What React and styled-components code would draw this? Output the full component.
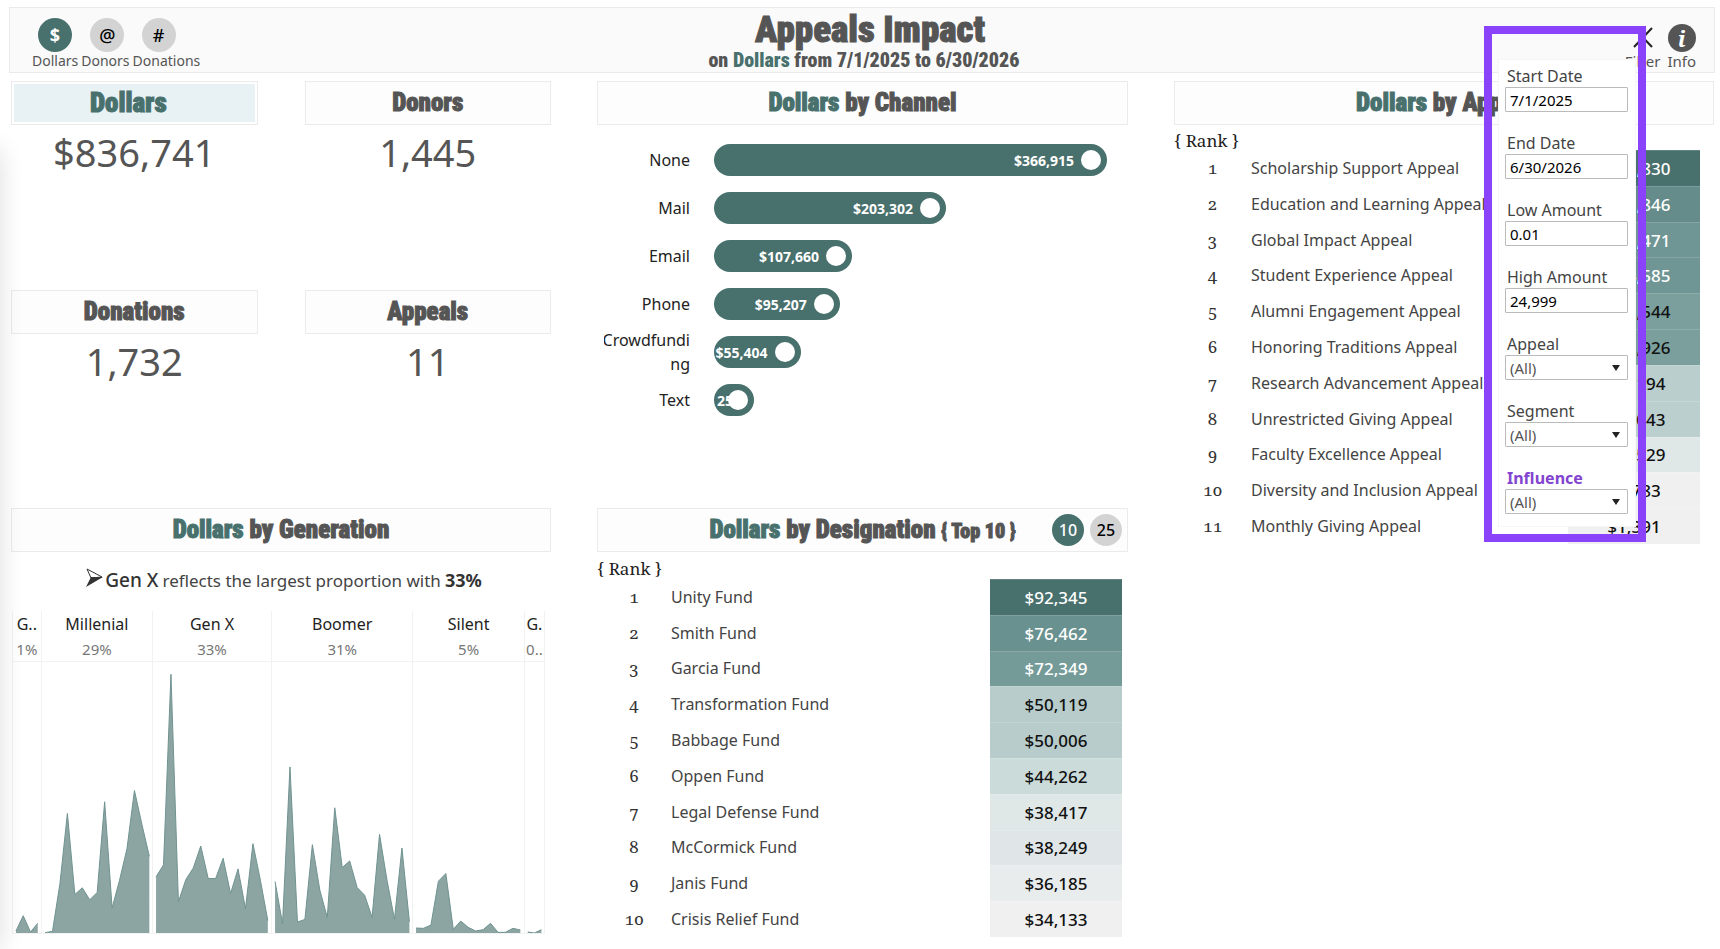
import React, { useState } from 'react'
import styled, { createGlobalStyle, css } from 'styled-components'

const TEAL = '#48706d'
const GREY = '#555'
const LINE = '#ebebeb'
const PURPLE = '#8a43fb'

const sans = '"Noto Sans", "Open Sans", sans-serif'
const serif = 'Georgia, "Noto Serif", "Liberation Serif", serif'
const display = 'Impact, "Roboto Condensed", "Open Sans Condensed", sans-serif'

const GlobalStyle = createGlobalStyle`
  * {
    box-sizing: border-box;
  }
  body {
    margin: 0;
    background: #fff;
    color: #333;
    font-family: ${sans};
    font-size: 16px;
  }
  button, input, select {
    font-family: inherit;
  }
`

const Page = styled.div`
  position: relative;
  min-height: 100vh;
  padding-top: 7px;

  /* soft shade along the left edge */
  &::before {
    content: '';
    position: absolute;
    top: 150px;
    bottom: 0;
    left: -20px;
    width: 20px;
    box-shadow: 0 0 24px rgba(0, 0, 0, 0.14);
  }
`

/* header */

const Header = styled.header`
  display: grid;
  grid-template-columns: 1fr auto 1fr;
  height: 66px;
  margin: 0 5px 0 9px;
  padding: 0 18px 0 22px;
  background: #fafafa;
  border: 1px solid ${LINE};
`

const Toolbar = styled.div`
  display: flex;
  align-items: flex-end;
  justify-content: ${p => p.$end ? 'flex-end' : 'flex-start'};
  gap: ${p => p.$end ? 7 : 3}px;
  padding-bottom: 2px;
`

const Tool = styled.button`
  display: flex;
  flex-direction: column;
  align-items: ${p => p.$inset ? 'flex-start' : 'center'};
  padding: 0;
  border: none;
  background: none;
  color: ${GREY};
  font-size: ${p => p.$inset ? 14 : 15}px;
  line-height: 18px;
  cursor: pointer;
`

const Disc = styled.span`
  display: flex;
  align-items: center;
  justify-content: center;
  width: 34px;
  height: 34px;
  margin-left: ${p => p.$inset || 0}px;
  border-radius: 50%;
  background: ${p => p.$on ? TEAL : '#d3d3d3'};
  color: ${p => p.$on ? '#fff' : '#000'};
  font-size: 18px;
  font-weight: ${p => p.$on ? 700 : 500};
`

const InfoDisc = styled.span`
  display: flex;
  align-items: center;
  justify-content: center;
  width: 28px;
  height: 28px;
  border-radius: 50%;
  background: ${GREY};
  color: #fff;
  font: italic 700 22px "Noto Serif", serif;
`

const CloseIcon = styled.svg`
  width: 20px;
  height: 28px;
  stroke: #222;
  stroke-width: 2;
`

const Heading = styled.div`
  text-align: center;
  color: ${GREY};
  font-family: ${display};
  font-weight: 900;
`

const Title = styled.h1`
  margin: 4px 0 0;
  padding-left: 12px;
  font-size: 37px;
  font-weight: 900;
  line-height: 36px;
  -webkit-text-stroke: 1px ${GREY};
`

const Subtitle = styled.p`
  margin: 0;
  font-size: 20px;
  line-height: 24px;
`

const Accent = styled.span`
  color: ${TEAL};
`

/* panels */

const Main = styled.main`
  display: grid;
  grid-template-columns: 540fr 531fr 540fr;
  grid-template-rows: 427px auto;
  column-gap: 46px;
  padding: 8px 6px 0 11px;
`

const Panel = styled.section`
  min-width: 0;
  grid-row: ${p => p.$tall ? 'span 2' : 'auto'};
  grid-column: ${p => p.$col};
`

const Bar = styled.div`
  display: flex;
  align-items: center;
  height: 44px;
  padding: 2px;
  border: 1px solid ${LINE};
  background: #fdfdfd;
  ${p => p.$on && css`
    background: #e8f1f3 content-box;
  `}
`

const BarTitle = styled.h2`
  flex: 1;
  margin: 0;
  padding-left: ${p => p.$indent || 0}px;
  padding-right: ${p => p.$on ? 12 : 0}px;
  text-align: center;
  color: ${p => p.$on ? TEAL : GREY};
  font-family: ${display};
  font-size: ${p => p.$on ? 27 : 25}px;
  font-weight: 900;
  line-height: 34px;
  white-space: nowrap;
  -webkit-text-stroke: 1px;

  small {
    font-size: 20px;
  }
`

const KpiGrid = styled.div`
  display: grid;
  grid-template-columns: 1fr 1fr;
  grid-auto-rows: 209px;
  column-gap: 47px;
`

const KpiValue = styled.div`
  margin-top: 1px;
  text-align: center;
  color: ${GREY};
  font-size: 38px;
  line-height: 52px;
`

/* channel bars */

const Channels = styled.ul`
  margin: 0;
  padding: 11px 21px 0 7px;
  list-style: none;
`

const Channel = styled.li`
  display: flex;
  align-items: center;
  gap: 24px;
  height: 48px;
`

const ChannelName = styled.span`
  display: flex;
  flex-direction: column;
  align-items: flex-end;
  width: 86px;
  overflow: hidden;
  color: #222;
  line-height: 24px;
  white-space: nowrap;
`

const Track = styled.div`
  flex: 1;
`

const Pill = styled.div`
  display: flex;
  align-items: center;
  justify-content: flex-end;
  gap: 7px;
  height: 32px;
  padding-right: 6px;
  border-radius: 16px;
  overflow: hidden;
  background: ${TEAL};
`

const PillValue = styled.span`
  margin-right: ${p => p.$tucked ? -12 : 0}px;
  color: #fff;
  font-size: 14px;
  font-weight: 700;
`

const Knob = styled.span`
  flex: none;
  width: 20px;
  height: 20px;
  border-radius: 50%;
  background: #fff;
  z-index: 1;
`

/* generation chart */

const Insight = styled.p`
  display: flex;
  align-items: baseline;
  justify-content: center;
  gap: 4px;
  height: 47px;
  margin: 12px 0 0;
  padding-left: 6px;
  color: #444;
  font-size: 17px;
  line-height: 32px;
`

const Lead = styled.strong`
  color: #333;
  font-size: ${p => p.$heavy ? 18 : 19}px;
  font-weight: ${p => p.$heavy ? 700 : 500};
`

const ArrowIcon = styled.svg`
  width: 17px;
  height: 19px;
  margin-right: -2px;
`

const Areas = styled.div`
  display: grid;
  grid-template-columns: ${p => p.$cols};
  padding: 0 6px 0 1px;
`

const Area = styled.div`
  min-width: 0;
  border-left: 1px solid #f2f2f2;
  text-align: center;
  white-space: nowrap;

  &:last-child {
    border-right: 1px solid #f2f2f2;
  }
`

const AreaName = styled.div`
  color: #222;
  line-height: 26px;
`

const AreaShare = styled.div`
  border-bottom: 1px solid #f2f2f2;
  color: #777;
  font-size: 15px;
  line-height: 24px;
`

const AreaPlot = styled.svg`
  display: block;
  width: 100%;
  height: 272px;
  border-bottom: 1px solid #f2f2f2;
`

/* ranked tables */

const RankLabel = styled.div`
  height: ${p => p.$height}px;
  color: #222;
  font-family: ${serif};
  font-size: 17px;
  line-height: ${p => p.$height + 7}px;
`

const RankTable = styled.table`
  width: 100%;
  height: ${p => p.$height}px;
  padding-right: ${p => p.$gutter}px;
  border-spacing: 0;
  border-collapse: separate;
`

const RankCell = styled.td`
  width: ${p => p.$width}px;
  padding: 0;
  text-align: center;
  color: #333;
  font-family: ${serif};
  font-size: 17px;
  line-height: 20px;
  font-variant-numeric: oldstyle-nums;
`

const NameCell = styled.td`
  padding: 0;
  color: #444;
`

const ValueCell = styled.td`
  width: 132px;
  padding: 0;
  border-top: 1px solid rgba(255, 255, 255, 0.15);
  background: ${p => p.$shade};
  color: ${p => p.$light ? '#fff' : '#111'};
  text-align: center;
  font-size: 17px;
  font-weight: 500;
`

const TopSwitch = styled.div`
  display: flex;
  gap: 6px;
  padding-right: 3px;
`

const TopButton = styled.button`
  width: 32px;
  height: 32px;
  padding: 0;
  border: none;
  border-radius: 50%;
  background: ${p => p.$on ? TEAL : '#d3d3d3'};
  color: ${p => p.$on ? '#fff' : '#000'};
  font-size: 16px;
  font-weight: 500;
  cursor: pointer;
`

/* filter popover */

const Callout = styled.div`
  position: absolute;
  top: 26px;
  right: 74px;
  width: 162px;
  padding: 25px 2px 7px 6px;
  border: 8px solid ${PURPLE};
`

const FilterPanel = styled.form`
  display: flex;
  flex-direction: column;
  gap: 18px;
  padding: 3px 7px 12px 6px;
  border: 1px solid #f6f6f6;
  background: #fff;
`

const Field = styled.div`
  position: relative;

  label {
    display: block;
    padding: 2px 0 0 2px;
    color: ${p => p.$accent ? '#8344d0' : '#444'};
    font-size: 16px;
    font-weight: ${p => p.$accent ? 700 : 400};
    line-height: 22px;
  }
  svg {
    position: absolute;
    right: 8px;
    bottom: 9px;
    width: 8px;
    height: 6px;
    fill: #222;
    pointer-events: none;
  }
`

const box = css`
  display: block;
  width: 100%;
  height: 25px;
  padding: 0 4px;
  border: 1px solid #bbb;
  border-radius: 1px;
  background: #fff;
  font-size: 15px;
`

const TextBox = styled.input`
  ${box}
  color: #000;
`

const DropDown = styled.select`
  ${box}
  appearance: none;
  color: #555;
`

const tools = [
  { name: 'Dollars', glyph: '$', inset: 6 },
  { name: 'Donors', glyph: '@', inset: 9 },
  { name: 'Donations', glyph: '#', inset: 9 }
]

const kpis = [
  ['Dollars', '$836,741'],
  ['Donors', '1,445'],
  ['Donations', '1,732'],
  ['Appeals', '11']
]

const channels = [
  { lines: ['None'], amount: 366915, label: '$366,915' },
  { lines: ['Mail'], amount: 203302, label: '$203,302' },
  { lines: ['Email'], amount: 107660, label: '$107,660' },
  { lines: ['Phone'], amount: 95207, label: '$95,207' },
  { lines: ['Crowdfundi', 'ng'], amount: 55404, label: '$55,404' },
  { lines: ['Text'], amount: 8253, label: '25', tucked: true }
]

const generations = [
  { name: 'G..', share: '1%', points: [6, 52, 3, 29] },
  { name: 'Millenial', share: '29%', points: [1, 5, 149, 360, 116, 136, 100, 122, 395, 75, 159, 254, 429, 327, 231] },
  { name: 'Gen X', share: '33%', points: [169, 205, 779, 94, 161, 196, 262, 164, 164, 225, 119, 193, 73, 269, 159, 37] },
  { name: 'Boomer', share: '31%', points: [155, 28, 500, 33, 41, 266, 129, 47, 377, 197, 217, 137, 114, 47, 297, 159, 41, 256, 34] },
  { name: 'Silent', share: '5%', points: [15, 14, 24, 156, 179, 11, 36, 17, 6, 10, 29, 2, 2, 14, 9] },
  { name: 'G.', share: '0..', points: [3, 0, 10] }
]

const designations = [
  ['Unity Fund', '$92,345', '#48706d', true],
  ['Smith Fund', '$76,462', '#69918f', true],
  ['Garcia Fund', '$72,349', '#759b99', true],
  ['Transformation Fund', '$50,119', '#b7cccb'],
  ['Babbage Fund', '$50,006', '#b7cccb'],
  ['Oppen Fund', '$44,262', '#cadbd9'],
  ['Legal Defense Fund', '$38,417', '#dfe8e7'],
  ['McCormick Fund', '$38,249', '#e0e6e8'],
  ['Janis Fund', '$36,185', '#e8eced'],
  ['Crisis Relief Fund', '$34,133', '#f0f0f0']
]

const appeals = [
  ['Scholarship Support Appeal', '$165,830', '#48706d', true],
  ['Education and Learning Appeal', '$135,846', '#658c8a', true],
  ['Global Impact Appeal', '$125,471', '#6f9694', true],
  ['Student Experience Appeal', '$124,585', '#6f9694', true],
  ['Alumni Engagement Appeal', '$113,544', '#7a9f9d'],
  ['Honoring Traditions Appeal', '$112,926', '#7a9f9d'],
  ['Research Advancement Appeal', '$51,194', '#bacecd'],
  ['Unrestricted Giving Appeal', '$51,043', '#bbcfce'],
  ['Faculty Excellence Appeal', '$21,529', '#dfe8e7'],
  ['Diversity and Inclusion Appeal', '$7,783', '#f0f0f0'],
  ['Monthly Giving Appeal', '$1,391', '#f0f0f0']
]

const textFilters = [
  ['Start Date', '7/1/2025'],
  ['End Date', '6/30/2026'],
  ['Low Amount', '0.01'],
  ['High Amount', '24,999']
]

const STEP = 22
const PAD = 9
const FLOOR = 816

const plotWidth = points => (points.length - 1) * STEP + PAD * 2

const MetricTitle = ({ metric, indent, children }) => (
  <BarTitle $indent={indent}><Accent>{metric}</Accent> {children}</BarTitle>
)

const GenerationPlot = ({ points }) => {
  const width = plotWidth(points)
  const line = points.map((v, i) => `${PAD + i * STEP},${FLOOR - v}`).join(' ')
  return (
    <AreaPlot viewBox={`0 0 ${width} ${FLOOR}`} preserveAspectRatio='none' aria-hidden='true'>
      <polygon fill='#8ca5a3' points={`${PAD},${FLOOR} ${line} ${width - PAD},${FLOOR}`} />
      <polyline fill='none' stroke='#6f9391' strokeWidth='1' vectorEffect='non-scaling-stroke' points={line} />
    </AreaPlot>
  )
}

const Ranking = ({ rows, height, rankWidth, gutter, labelHeight }) => (
  <>
    <RankLabel $height={labelHeight}>{'{ Rank }'}</RankLabel>
    <RankTable $height={height} $gutter={gutter}>
      <tbody>
        {rows.map(([name, value, shade, light], i) => (
          <tr key={name}>
            <RankCell $width={rankWidth}>{i + 1}</RankCell>
            <NameCell>{name}</NameCell>
            <ValueCell $shade={shade} $light={light}>{value}</ValueCell>
          </tr>
        ))}
      </tbody>
    </RankTable>
  </>
)

const Filters = () => (
  <Callout>
    <FilterPanel>
      {textFilters.map(([name, value]) => (
        <Field key={name}>
          <label htmlFor={name}>{name}</label>
          <TextBox id={name} type='text' defaultValue={value} />
        </Field>
      ))}
      {['Appeal', 'Segment', 'Influence'].map(name => (
        <Field key={name} $accent={name === 'Influence'}>
          <label htmlFor={name}>{name}</label>
          <DropDown id={name}>
            <option>(All)</option>
          </DropDown>
          <svg viewBox='0 0 8 6'><path d='M0 0h8L4 6z' /></svg>
        </Field>
      ))}
    </FilterPanel>
  </Callout>
)

export default function App () {
  const [metric, setMetric] = useState('Dollars')
  const [top, setTop] = useState(10)
  const max = channels[0].amount

  return (
    <Page>
      <GlobalStyle />
      <Header>
        <Toolbar>
          {tools.map(({ name, glyph, inset }) => (
            <Tool key={name} $inset={inset} onClick={() => setMetric(name)}>
              <Disc $inset={inset} $on={metric === name}>{glyph}</Disc>
              {name}
            </Tool>
          ))}
        </Toolbar>
        <Heading>
          <Title>Appeals Impact</Title>
          <Subtitle>on <Accent>{metric}</Accent> from 7/1/2025 to 6/30/2026</Subtitle>
        </Heading>
        <Toolbar $end>
          <Tool>
            <CloseIcon viewBox='0 0 20 28'><path d='M1 4l18 19M19 4L1 23' /></CloseIcon>
            Filter
          </Tool>
          <Tool>
            <InfoDisc>i</InfoDisc>
            Info
          </Tool>
        </Toolbar>
      </Header>

      <Main>
        <Panel $col={1}>
          <KpiGrid>
            {kpis.map(([name, value]) => (
              <div key={name}>
                <Bar $on={metric === name}>
                  <BarTitle $on={metric === name}>{name}</BarTitle>
                </Bar>
                <KpiValue>{value}</KpiValue>
              </div>
            ))}
          </KpiGrid>
        </Panel>

        <Panel $col={2}>
          <Bar><MetricTitle metric={metric}>by Channel</MetricTitle></Bar>
          <Channels>
            {channels.map(({ lines, amount, label, tucked }) => (
              <Channel key={label}>
                <ChannelName>
                  {lines.map(line => <span key={line}>{line}</span>)}
                </ChannelName>
                <Track>
                  <Pill style={{ width: `calc(32px + (100% - 32px) * ${amount / max})` }}>
                    <PillValue $tucked={tucked}>{label}</PillValue>
                    <Knob />
                  </Pill>
                </Track>
              </Channel>
            ))}
          </Channels>
        </Panel>

        <Panel $col={3} $tall>
          <Bar><MetricTitle metric={metric}>by Appeal</MetricTitle></Bar>
          <Ranking rows={appeals} height={394} rankWidth={77} gutter={14} labelHeight={25} />
        </Panel>

        <Panel $col={1}>
          <Bar><MetricTitle metric={metric}>by Generation</MetricTitle></Bar>
          <Insight>
            <ArrowIcon viewBox='0 0 17 19'>
              <path d='M1 1L16 9L5 10z' fill='none' stroke='#333' />
              <path d='M5 9H17L0 19z' fill='#333' />
            </ArrowIcon>
            <Lead>Gen X</Lead>
            <span>reflects the largest proportion with</span>
            <Lead $heavy>33%</Lead>
          </Insight>
          <Areas $cols={generations.map(g => `${plotWidth(g.points)}fr`).join(' ')}>
            {generations.map(({ name, share, points }) => (
              <Area key={name}>
                <AreaName>{name}</AreaName>
                <AreaShare>{share}</AreaShare>
                <GenerationPlot points={points} />
              </Area>
            ))}
          </Areas>
        </Panel>

        <Panel $col={2}>
          <Bar>
            <MetricTitle metric={metric} indent={73}>by Designation <small>{`{ Top ${top} }`}</small></MetricTitle>
            <TopSwitch>
              {[10, 25].map(n => (
                <TopButton key={n} $on={top === n} onClick={() => setTop(n)}>{n}</TopButton>
              ))}
            </TopSwitch>
          </Bar>
          <Ranking rows={designations} height={358} rankWidth={74} gutter={6} labelHeight={27} />
        </Panel>
      </Main>

      <Filters />
    </Page>
  )
}
